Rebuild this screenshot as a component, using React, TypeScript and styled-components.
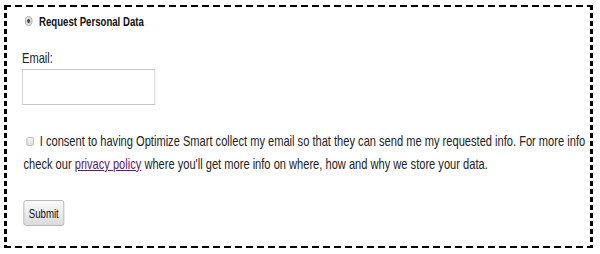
import styled, { createGlobalStyle } from "styled-components";

import type { FC } from "react";

// the reference is a squeezed capture: text runs at ~74% of its normal width
const SQUEEZE = 0.74;

const GlobalStyle = createGlobalStyle`
  html, body {
    margin: 0;
    padding: 0;
    background: #fff;
  }
  body {
    font-family: "Liberation Sans", Arial, sans-serif;
    color: #222;
  }
`;

const App: FC = () => {
  return (
    <>
      <GlobalStyle />
      <Frame>
        <Content>
          <ChoiceRow>
            <Radio />
            <ChoiceLabel>Request Personal Data</ChoiceLabel>
          </ChoiceRow>
          <FieldLabel htmlFor="email">Email:</FieldLabel>
          <EmailInput id="email" type="text" />
          <Consent>
            <Checkbox />I consent to having Optimize Smart collect my email so
            that they can send me my requested info. For more info check our{" "}
            <PolicyLink href="#privacy">privacy policy</PolicyLink> where
            you'll get more info on where, how and why we store your data.
          </Consent>
          <SubmitButton type="button">Submit</SubmitButton>
        </Content>
      </Frame>
    </>
  );
};

export default App;

const Frame = styled.form`
  box-sizing: border-box;
  width: 589px;
  height: 243px;
  margin: 5px 0 0 4px;
  padding: 6px 0 0 18px;
  overflow: hidden;

  background:
    repeating-linear-gradient(90deg, #000 0 7px, transparent 7px 11px) left top / 100% 2px no-repeat,
    repeating-linear-gradient(90deg, #000 0 7px, transparent 7px 11px) left bottom / 100% 2px no-repeat,
    repeating-linear-gradient(180deg, #000 0 5px, transparent 5px 8px) left top / 3px 100% no-repeat,
    repeating-linear-gradient(180deg, #000 0 5px, transparent 5px 8px) right top / 3px 100% no-repeat;
`;

const Content = styled.div`
  width: 780px;
  transform: scaleX(${SQUEEZE});
  transform-origin: left top;
`;

const ChoiceRow = styled.div`
  display: flex;
  align-items: center;
  height: 20px;
  padding-left: 4px;
`;

const Radio = styled.span`
  box-sizing: border-box;
  width: 10px;
  height: 10px;
  margin-right: 9px;
  border: 1px solid #a0a0a0;
  border-radius: 50%;
  background: radial-gradient(circle at center, #4a4a4a 0 28%, #d6d6d6 40%, #f4f4f4 100%);
`;

const ChoiceLabel = styled.span`
  font-size: 13px;
  font-weight: bold;
  color: #111;
`;

const FieldLabel = styled.label`
  display: block;
  margin-top: 18px;
  font-size: 15px;
  line-height: 18px;
`;

const EmailInput = styled.input`
  box-sizing: border-box;
  display: block;
  width: 180px;
  height: 36px;
  margin: 2px 0 0;
  border: 1px solid #c6c6c6;
  background: #fff;
`;

const Consent = styled.p`
  margin: 24px 0 0 2px;
  font-size: 15px;
  line-height: 23px;
`;

const Checkbox = styled.span`
  box-sizing: border-box;
  display: inline-block;
  width: 10px;
  height: 9px;
  margin: 0 8px 0 4px;
  border: 1px solid #b4b4b4;
  border-radius: 2px;
  background: linear-gradient(#f6f6f6, #dedede);
  vertical-align: 0;
`;

const PolicyLink = styled.a`
  color: #5b1a6e;
  text-decoration: underline;
`;

const SubmitButton = styled.button`
  display: block;
  box-sizing: border-box;
  width: 55px;
  height: 26px;
  margin: 25px 0 0 2px;
  padding: 0;
  border: 1px solid #adadad;
  border-radius: 3px;
  background: linear-gradient(#fafafa, #dcdcdc);
  font-family: inherit;
  font-size: 13px;
  color: #111;
`;
